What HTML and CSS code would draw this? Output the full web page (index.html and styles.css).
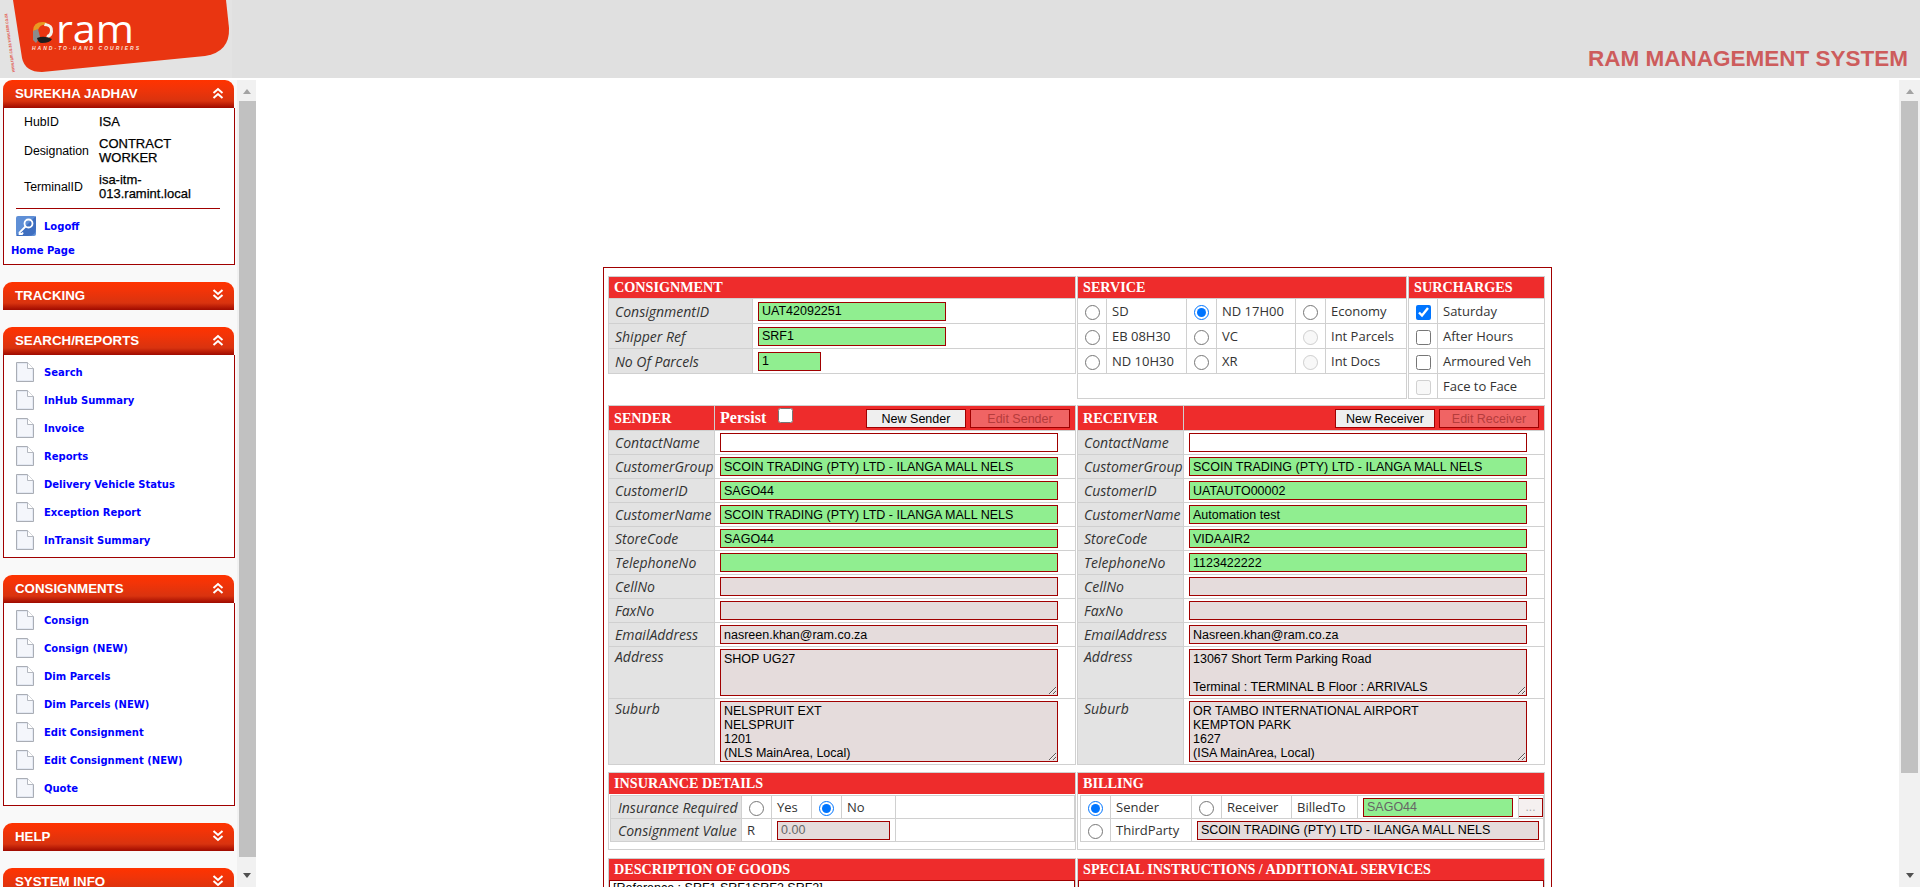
FILE: index.html
```html
<!DOCTYPE html>
<html lang="en">
<head>
    <meta charset="UTF-8">
    <meta name="viewport" content="width=device-width, initial-scale=1.0">
    <title>RAM Management System</title>
    <link rel="stylesheet" href="styles.css">
</head>
<body>
    <svg class="defs" width="0" height="0">
        <symbol id="chev-up" viewBox="0 0 12 12"><path d="M1.500 6 6 2l4.500 4M1.500 11 6 7l4.500 4" fill="none" stroke="#fff" stroke-width="2"/></symbol>
        <symbol id="chev-down" viewBox="0 0 12 12"><path d="M1.500 1 6 5l4.500-4M1.500 6 6 10l4.500-4" fill="none" stroke="#fff" stroke-width="2"/></symbol>
        <symbol id="page" viewBox="0 0 18 20">
            <path d="M.5.500h11l6 6v13H.5z" fill="#e4e9f3" stroke="#a9adb5"/>
            <path d="M2 2h9v5h5v11H2z" fill="#f4f6fb"/>
            <path d="M11.500.500v6h6" fill="#fff" stroke="#b4b8c0"/>
        </symbol>
    </svg>

    <header class="top-bar">
        <svg class="logo" width="232" height="78" viewBox="0 0 232 78">
            <rect width="232" height="78" fill="#e3e3e3"/>
            <path d="M13 0 22 58Q25 72 42 72L205 56Q230 52 229 28L226 0Z" fill="#e93511"/>
            <text class="logo-side" transform="translate(15 72) rotate(-97.700)" textLength="59" lengthAdjust="spacingAndGlyphs">www.ram.co.za www.ram.co.za</text>
            <path d="M33 31Q33 22 43 22 48 22 47 25 40 24 38 30Z" fill="#e89a22"/>
            <path d="M33 31 38 29 40 37 36 43 33 40Z" fill="#8b8b8b"/>
            <path d="M45 23Q54 24 53 32 52 38 46 38L47 35Q50 34 50 30 50 26 44 26Z" fill="#f4f1ea"/>
            <path d="M37 38Q44 35 52 39 50 43 42 43 38 43 37 38Z" fill="#1d1d1d"/>
            <text class="logo-name" x="56" y="43" textLength="78" lengthAdjust="spacingAndGlyphs">ram</text>
            <text class="logo-tag" x="32" y="50" textLength="107" lengthAdjust="spacing">HAND-TO-HAND COURIERS</text>
        </svg>
        <h1 class="app-title">RAM MANAGEMENT SYSTEM</h1>
    </header>

    <div class="page-body">
        <aside class="side-menu">
            <section class="panel">
                <div class="panel-head"><span>SUREKHA JADHAV</span><svg width="12" height="12"><use href="#chev-up"/></svg></div>
                <div class="panel-body user-body">
                    <div class="user-info">
                        <span class="user-key">HubID</span><span class="user-val">ISA</span>
                        <span class="user-key">Designation</span><span class="user-val">CONTRACT WORKER</span>
                        <span class="user-key">TerminalID</span><span class="user-val">isa-itm-<br>013.ramint.local</span>
                    </div>
                    <hr class="user-rule">
                    <a class="menu-link logoff-link" href="#">
                        <svg width="20" height="20" viewBox="0 0 20 20">
                            <rect width="20" height="20" rx="2" fill="#5f8fd6"/>
                            <path d="M0 20 20 0v12q0 8-8 8z" fill="#3f6fc0"/>
                            <circle cx="12.500" cy="7.500" r="4" fill="none" stroke="#fff" stroke-width="1.800"/>
                            <path d="M9.500 10.500 3.500 16.500v1.500H6l1-1.500" fill="none" stroke="#fff" stroke-width="1.800"/>
                        </svg>
                        Logoff
                    </a>
                    <a class="home-link" href="#">Home Page</a>
                </div>
            </section>

            <section class="panel">
                <div class="panel-head"><span>TRACKING</span><svg width="12" height="12"><use href="#chev-down"/></svg></div>
            </section>

            <section class="panel">
                <div class="panel-head"><span>SEARCH/REPORTS</span><svg width="12" height="12"><use href="#chev-up"/></svg></div>
                <div class="panel-body">
                    <a class="menu-link" href="#"><svg width="18" height="20"><use href="#page"/></svg>Search</a>
                    <a class="menu-link" href="#"><svg width="18" height="20"><use href="#page"/></svg>InHub Summary</a>
                    <a class="menu-link" href="#"><svg width="18" height="20"><use href="#page"/></svg>Invoice</a>
                    <a class="menu-link" href="#"><svg width="18" height="20"><use href="#page"/></svg>Reports</a>
                    <a class="menu-link" href="#"><svg width="18" height="20"><use href="#page"/></svg>Delivery Vehicle Status</a>
                    <a class="menu-link" href="#"><svg width="18" height="20"><use href="#page"/></svg>Exception Report</a>
                    <a class="menu-link" href="#"><svg width="18" height="20"><use href="#page"/></svg>InTransit Summary</a>
                </div>
            </section>

            <section class="panel">
                <div class="panel-head"><span>CONSIGNMENTS</span><svg width="12" height="12"><use href="#chev-up"/></svg></div>
                <div class="panel-body">
                    <a class="menu-link" href="#"><svg width="18" height="20"><use href="#page"/></svg>Consign</a>
                    <a class="menu-link" href="#"><svg width="18" height="20"><use href="#page"/></svg>Consign (NEW)</a>
                    <a class="menu-link" href="#"><svg width="18" height="20"><use href="#page"/></svg>Dim Parcels</a>
                    <a class="menu-link" href="#"><svg width="18" height="20"><use href="#page"/></svg>Dim Parcels (NEW)</a>
                    <a class="menu-link" href="#"><svg width="18" height="20"><use href="#page"/></svg>Edit Consignment</a>
                    <a class="menu-link" href="#"><svg width="18" height="20"><use href="#page"/></svg>Edit Consignment (NEW)</a>
                    <a class="menu-link" href="#"><svg width="18" height="20"><use href="#page"/></svg>Quote</a>
                </div>
            </section>

            <section class="panel">
                <div class="panel-head"><span>HELP</span><svg width="12" height="12"><use href="#chev-down"/></svg></div>
            </section>

            <section class="panel">
                <div class="panel-head"><span>SYSTEM INFO</span><svg width="12" height="12"><use href="#chev-down"/></svg></div>
            </section>
        </aside>

        <div class="scroll-bar side-scroll"><i class="arrow-up"></i><b class="thumb"></b><i class="arrow-down"></i></div>

        <main class="main-area">
            <form class="form-box">
                <div class="form-row top-row">
                    <table class="sect consignment-table">
                        <colgroup><col class="c-144"><col></colgroup>
                        <tr class="sect-head h21"><th colspan="2">CONSIGNMENT</th></tr>
                        <tr class="r25"><td class="lbl">ConsignmentID</td><td><input class="fld green w188" value="UAT42092251"></td></tr>
                        <tr class="r25"><td class="lbl">Shipper Ref</td><td><input class="fld green w188" value="SRF1"></td></tr>
                        <tr class="r25"><td class="lbl">No Of Parcels</td><td><input class="fld green w63" value="1"></td></tr>
                    </table>
                    <div class="service-wrap">
                        <table class="sect service-table">
                            <colgroup><col class="c-29"><col class="c-80"><col class="c-30"><col class="c-79"><col class="c-30"><col></colgroup>
                            <tr class="sect-head h21"><th colspan="6">SERVICE</th></tr>
                            <tr class="r25"><td class="opt"><input type="radio" name="svc"></td><td>SD</td><td class="opt"><input type="radio" name="svc" checked></td><td>ND 17H00</td><td class="opt"><input type="radio" name="svc"></td><td>Economy</td></tr>
                            <tr class="r25"><td class="opt"><input type="radio" name="svc"></td><td>EB 08H30</td><td class="opt"><input type="radio" name="svc"></td><td>VC</td><td class="opt"><input type="radio" name="svc" disabled></td><td>Int Parcels</td></tr>
                            <tr class="r25"><td class="opt"><input type="radio" name="svc"></td><td>ND 10H30</td><td class="opt"><input type="radio" name="svc"></td><td>XR</td><td class="opt"><input type="radio" name="svc" disabled></td><td>Int Docs</td></tr>
                            <tr class="r25"><td colspan="6"></td></tr>
                        </table>
                        <table class="sect surcharge-table">
                            <colgroup><col class="c-29"><col></colgroup>
                            <tr class="sect-head h21"><th colspan="2">SURCHARGES</th></tr>
                            <tr class="r25"><td class="opt"><input type="checkbox" checked></td><td>Saturday</td></tr>
                            <tr class="r25"><td class="opt"><input type="checkbox"></td><td>After Hours</td></tr>
                            <tr class="r25"><td class="opt"><input type="checkbox"></td><td>Armoured Veh</td></tr>
                            <tr class="r25"><td class="opt"><input type="checkbox" disabled></td><td>Face to Face</td></tr>
                        </table>
                    </div>
                </div>

                <div class="form-row party-row">
                    <table class="sect party-table">
                        <colgroup><col class="c-106"><col></colgroup>
                        <tr class="sect-head h24">
                            <th>SENDER</th>
                            <th class="head-tools">
                                <span class="persist">Persist <input type="checkbox"></span>
                                <span class="head-btns"><button type="button" class="btn">New Sender</button><button type="button" class="btn off" disabled>Edit Sender</button></span>
                            </th>
                        </tr>
                        <tr class="r24"><td class="lbl">ContactName</td><td><input class="fld white w338"></td></tr>
                        <tr class="r24"><td class="lbl">CustomerGroup</td><td><input class="fld green w338" value="SCOIN TRADING (PTY) LTD - ILANGA MALL NELS"></td></tr>
                        <tr class="r24"><td class="lbl">CustomerID</td><td><input class="fld green w338" value="SAGO44"></td></tr>
                        <tr class="r24"><td class="lbl">CustomerName</td><td><input class="fld green w338" value="SCOIN TRADING (PTY) LTD - ILANGA MALL NELS"></td></tr>
                        <tr class="r24"><td class="lbl">StoreCode</td><td><input class="fld green w338" value="SAGO44"></td></tr>
                        <tr class="r24"><td class="lbl">TelephoneNo</td><td><input class="fld green w338"></td></tr>
                        <tr class="r24"><td class="lbl">CellNo</td><td><input class="fld grey w338"></td></tr>
                        <tr class="r24"><td class="lbl">FaxNo</td><td><input class="fld grey w338"></td></tr>
                        <tr class="r24"><td class="lbl">EmailAddress</td><td><input class="fld grey w338" value="nasreen.khan@ram.co.za"></td></tr>
                        <tr class="r52"><td class="lbl lbl-top">Address</td><td><textarea class="fld grey w338 area-addr">SHOP UG27</textarea></td></tr>
                        <tr class="r66"><td class="lbl lbl-top">Suburb</td><td><textarea class="fld grey w338 area-sub">NELSPRUIT EXT
NELSPRUIT
1201
(NLS MainArea, Local)</textarea></td></tr>
                    </table>
                    <table class="sect party-table">
                        <colgroup><col class="c-106"><col></colgroup>
                        <tr class="sect-head h24">
                            <th>RECEIVER</th>
                            <th class="head-tools head-right">
                                <span class="head-btns"><button type="button" class="btn">New Receiver</button><button type="button" class="btn off" disabled>Edit Receiver</button></span>
                            </th>
                        </tr>
                        <tr class="r24"><td class="lbl">ContactName</td><td><input class="fld white w338"></td></tr>
                        <tr class="r24"><td class="lbl">CustomerGroup</td><td><input class="fld green w338" value="SCOIN TRADING (PTY) LTD - ILANGA MALL NELS"></td></tr>
                        <tr class="r24"><td class="lbl">CustomerID</td><td><input class="fld green w338" value="UATAUTO00002"></td></tr>
                        <tr class="r24"><td class="lbl">CustomerName</td><td><input class="fld green w338" value="Automation test"></td></tr>
                        <tr class="r24"><td class="lbl">StoreCode</td><td><input class="fld green w338" value="VIDAAIR2"></td></tr>
                        <tr class="r24"><td class="lbl">TelephoneNo</td><td><input class="fld green w338" value="1123422222"></td></tr>
                        <tr class="r24"><td class="lbl">CellNo</td><td><input class="fld grey w338"></td></tr>
                        <tr class="r24"><td class="lbl">FaxNo</td><td><input class="fld grey w338"></td></tr>
                        <tr class="r24"><td class="lbl">EmailAddress</td><td><input class="fld grey w338" value="Nasreen.khan@ram.co.za"></td></tr>
                        <tr class="r52"><td class="lbl lbl-top">Address</td><td><textarea class="fld grey w338 area-addr">13067 Short Term Parking Road

Terminal : TERMINAL B Floor : ARRIVALS</textarea></td></tr>
                        <tr class="r66"><td class="lbl lbl-top">Suburb</td><td><textarea class="fld grey w338 area-sub">OR TAMBO INTERNATIONAL AIRPORT
KEMPTON PARK
1627
(ISA MainArea, Local)</textarea></td></tr>
                    </table>
                </div>

                <div class="form-row lower-row">
                    <div class="sect-box">
                        <div class="box-head">INSURANCE DETAILS</div>
                        <table class="sect inner-table insurance-table">
                            <colgroup><col class="c-131"><col class="c-30"><col class="c-40"><col class="c-30"><col class="c-54"><col></colgroup>
                            <tr class="r23"><td class="lbl">Insurance Required</td><td class="opt"><input type="radio" name="ins"></td><td>Yes</td><td class="opt"><input type="radio" name="ins" checked></td><td>No</td><td></td></tr>
                            <tr class="r23"><td class="lbl">Consignment Value</td><td>R</td><td colspan="3"><input class="fld grey w113 dim" value="0.00" readonly></td><td></td></tr>
                        </table>
                    </div>
                    <div class="sect-box">
                        <div class="box-head">BILLING</div>
                        <table class="sect inner-table billing-table">
                            <colgroup><col class="c-30"><col class="c-81"><col class="c-30"><col class="c-70"><col class="c-66"><col class="c-161"><col></colgroup>
                            <tr class="r23"><td class="opt"><input type="radio" name="bill" checked></td><td>Sender</td><td class="opt"><input type="radio" name="bill"></td><td>Receiver</td><td>BilledTo</td><td><input class="fld green w150 dim" value="SAGO44" readonly></td><td class="tight"><button type="button" class="btn-more" disabled>...</button></td></tr>
                            <tr class="r23"><td class="opt"><input type="radio" name="bill"></td><td>ThirdParty</td><td colspan="5"><input class="fld grey w342" value="SCOIN TRADING (PTY) LTD - ILANGA MALL NELS"></td></tr>
                        </table>
                    </div>
                </div>

                <div class="form-row goods-row">
                    <div class="sect-box">
                        <div class="box-head">DESCRIPTION OF GOODS</div>
                        <textarea class="goods-area">[Reference : SRF1,SRF1SRF2,SRF2]</textarea>
                    </div>
                    <div class="sect-box">
                        <div class="box-head">SPECIAL INSTRUCTIONS / ADDITIONAL SERVICES</div>
                        <textarea class="goods-area"></textarea>
                    </div>
                </div>
            </form>
        </main>

        <div class="scroll-bar main-scroll"><i class="arrow-up"></i><b class="thumb"></b><i class="arrow-down"></i></div>
    </div>
</body>
</html>
```

FILE: styles.css
```css
html,body{margin:0;height:100%;overflow:hidden;background:#fff;}
body{font-family:"Liberation Sans",Arial,sans-serif;font-size:13px;color:#000;}
.defs{position:absolute;}

/* top bar */
.top-bar{height:78px;background:#e0e0e0;display:flex;justify-content:space-between;align-items:flex-end;}
.logo{display:block;}
.logo-name{font-family:"Open Sans",sans-serif;font-size:38px;fill:#fff;}
.logo-tag{font-family:"Liberation Sans",sans-serif;font-size:5px;font-weight:bold;font-style:italic;fill:#fbe3da;}
.logo-side{font-family:"Liberation Sans",sans-serif;font-size:5px;font-weight:bold;fill:#e2574f;}
.app-title{margin:0 12px 6px 0;font-size:22.500px;line-height:26px;font-weight:bold;color:#cd5c5c;}

.page-body{display:flex;height:809px;padding-top:2px;box-sizing:border-box;}

/* left menu */
.side-menu{width:237px;height:807px;overflow:hidden;background:#f9f9f9;padding:0 0 0 3px;box-sizing:border-box;flex:none;}
.panel{width:232px;margin-bottom:17px;}
.panel-head{height:28px;box-sizing:border-box;width:231px;padding:0 10px 2px 12px;display:flex;justify-content:space-between;align-items:center;border-radius:9px 9px 0 0;background:linear-gradient(#ff3300 0,#f23408 30%,#d9330f 75%,#9e0a00 100%);color:#fff;font-size:13.300px;font-weight:bold;}
.panel-body{border:1px solid #a00000;border-top:0;background:#fff;padding:7px 0 0;box-sizing:border-box;}
.menu-link{display:flex;align-items:center;gap:10px;height:28px;padding:0 0 8px 12px;box-sizing:border-box;font-family:"DejaVu Sans",sans-serif;font-size:10px;font-weight:bold;color:#0000ff;text-decoration:none;white-space:nowrap;}
.menu-link:last-child{height:27px;padding-bottom:7px;}
.user-body{padding:0;height:157px;}
.user-info{display:grid;grid-template-columns:75px 92px;row-gap:8px;padding:7px 0 0 20px;align-items:center;font-size:12.300px;line-height:14px;}
.user-val{font-size:13px;-webkit-text-stroke:.25px #000;}
.user-rule{margin:7px 14px 7px 12px;border:0;border-top:1px solid #a00000;}
.menu-link.logoff-link{height:20px;padding:0 0 0 12px;gap:8px;}
.home-link{display:block;margin:9px 0 0 7px;font-family:"DejaVu Sans",sans-serif;font-size:10px;font-weight:bold;color:#0000ff;text-decoration:none;}

/* fake scrollbars */
.scroll-bar{height:807px;flex:none;background:#f1f1f1;display:flex;flex-direction:column;align-items:center;}
.side-scroll{width:19px;}
.main-scroll{width:21px;}
.arrow-up{width:0;height:0;margin:9px 0 7px;border:4.500px solid transparent;border-top:0;border-bottom:5px solid #a3a3a3;}
.thumb{display:block;width:17px;height:756px;background:#c1c1c1;}
.side-scroll .thumb{margin-left:2px;}
.main-scroll .thumb{height:672px;}
.arrow-down{width:0;height:0;margin:auto 0 9px;border:4.500px solid transparent;border-bottom:0;border-top:5px solid #505050;}

/* main form */
.main-area{flex:1;overflow:hidden;min-width:0;}
.form-box{width:949px;box-sizing:border-box;margin:187px auto 0;border:1px solid #a00000;padding:8px 0 0 4px;height:700px;}
.form-row{display:grid;grid-template-columns:468px 468px;column-gap:1px;align-items:start;}
.top-row{height:129px;}
.party-row{height:367px;}
.lower-row{height:86px;}
.service-wrap{display:flex;gap:1px;align-items:flex-start;}

.sect{border-collapse:collapse;table-layout:fixed;width:468px;font-family:"Open Sans",sans-serif;font-size:13px;color:#333;background:#fff;}
.sect td,.sect th{border:1px solid #d0d0d0;padding:0 0 0 5px;box-sizing:border-box;overflow:hidden;white-space:nowrap;}
.service-table{width:330px;}
.surcharge-table{width:137px;}
.sect-head th{background:#ee2c2c;color:#fff;text-align:left;font-family:"Liberation Serif",serif;font-size:14.200px;font-weight:bold;}
.h21{height:22px;}
.h24{height:25px;}
.r25{height:25px;}
.r24{height:24px;}
.r23{height:23px;}
.r52{height:52px;}
.r66{height:66px;}
.sect td.lbl{background:#e3e3e3;font-style:italic;font-size:14px;padding-left:6px;}
.lbl-top{vertical-align:top;}
.opt{text-align:center;}
.sect td.opt{padding-left:0;}
.sect td.tight{padding:0;}

.c-29{width:29px;}
.c-30{width:30px;}
.c-40{width:40px;}
.c-54{width:54px;}
.c-66{width:66px;}
.c-70{width:70px;}
.c-79{width:79px;}
.c-80{width:80px;}
.c-81{width:81px;}
.c-106{width:106px;}
.c-131{width:131px;}
.c-144{width:144px;}
.c-161{width:161px;}

input[type=radio],input[type=checkbox]{width:15px;height:15px;margin:0;vertical-align:middle;}

.fld{display:block;box-sizing:border-box;height:19px;border:1px solid #a00000;padding:0 3px;margin:0;border-radius:0;font-family:"Liberation Sans",Arial,sans-serif;font-size:12.500px;color:#000;outline:0;}
.green{background:#90ee90;}
.grey{background:#e5dcdc;}
.white{background:#fff;}
.dim{color:#666;}
.w63{width:63px;}
.w113{width:113px;}
.w150{width:150px;}
.w188{width:188px;}
.w338{width:338px;}
.w342{width:342px;}
textarea.fld{padding:2px 3px;line-height:14px;overflow:hidden;}
.area-addr{height:47px;}
.area-sub{height:61px;}

.sect-head .head-tools{position:relative;padding:0 5px;font-size:16px;}
.head-btns{position:absolute;right:5px;top:3px;display:flex;gap:4px;}
.persist input{margin:-8px 0 0 8px;}
.btn{width:100px;height:19px;box-sizing:border-box;border:1px solid #a00000;background:#efefef;padding:0;font-family:"Liberation Sans",Arial,sans-serif;font-size:12.500px;color:#000;}
.btn.off{background:#f06464;color:#b53c3c;}
.btn-more{display:block;width:25px;height:19px;box-sizing:border-box;border:1px solid #a00000;background:#f5f0f0;padding:0;color:#aaa;font-size:12px;margin-left:-1px;}

.sect-box{border:1px solid #d0d0d0;width:468px;box-sizing:border-box;height:78px;}
.box-head{height:21px;background:#ee2c2c;color:#fff;font-family:"Liberation Serif",serif;font-size:14.200px;font-weight:bold;line-height:21px;padding-left:5px;}
.inner-table{margin:1px 0 0 2px;width:464px;}
.insurance-table{margin-left:1px;width:465px;}
.sect.insurance-table td.lbl{padding-left:7px;}
.goods-row .sect-box{height:120px;}
.goods-area{display:block;width:100%;height:80px;box-sizing:border-box;border:1px solid #a00000;padding:0 3px;margin:0;font-family:"Liberation Sans",Arial,sans-serif;font-size:12.500px;resize:none;}
```
